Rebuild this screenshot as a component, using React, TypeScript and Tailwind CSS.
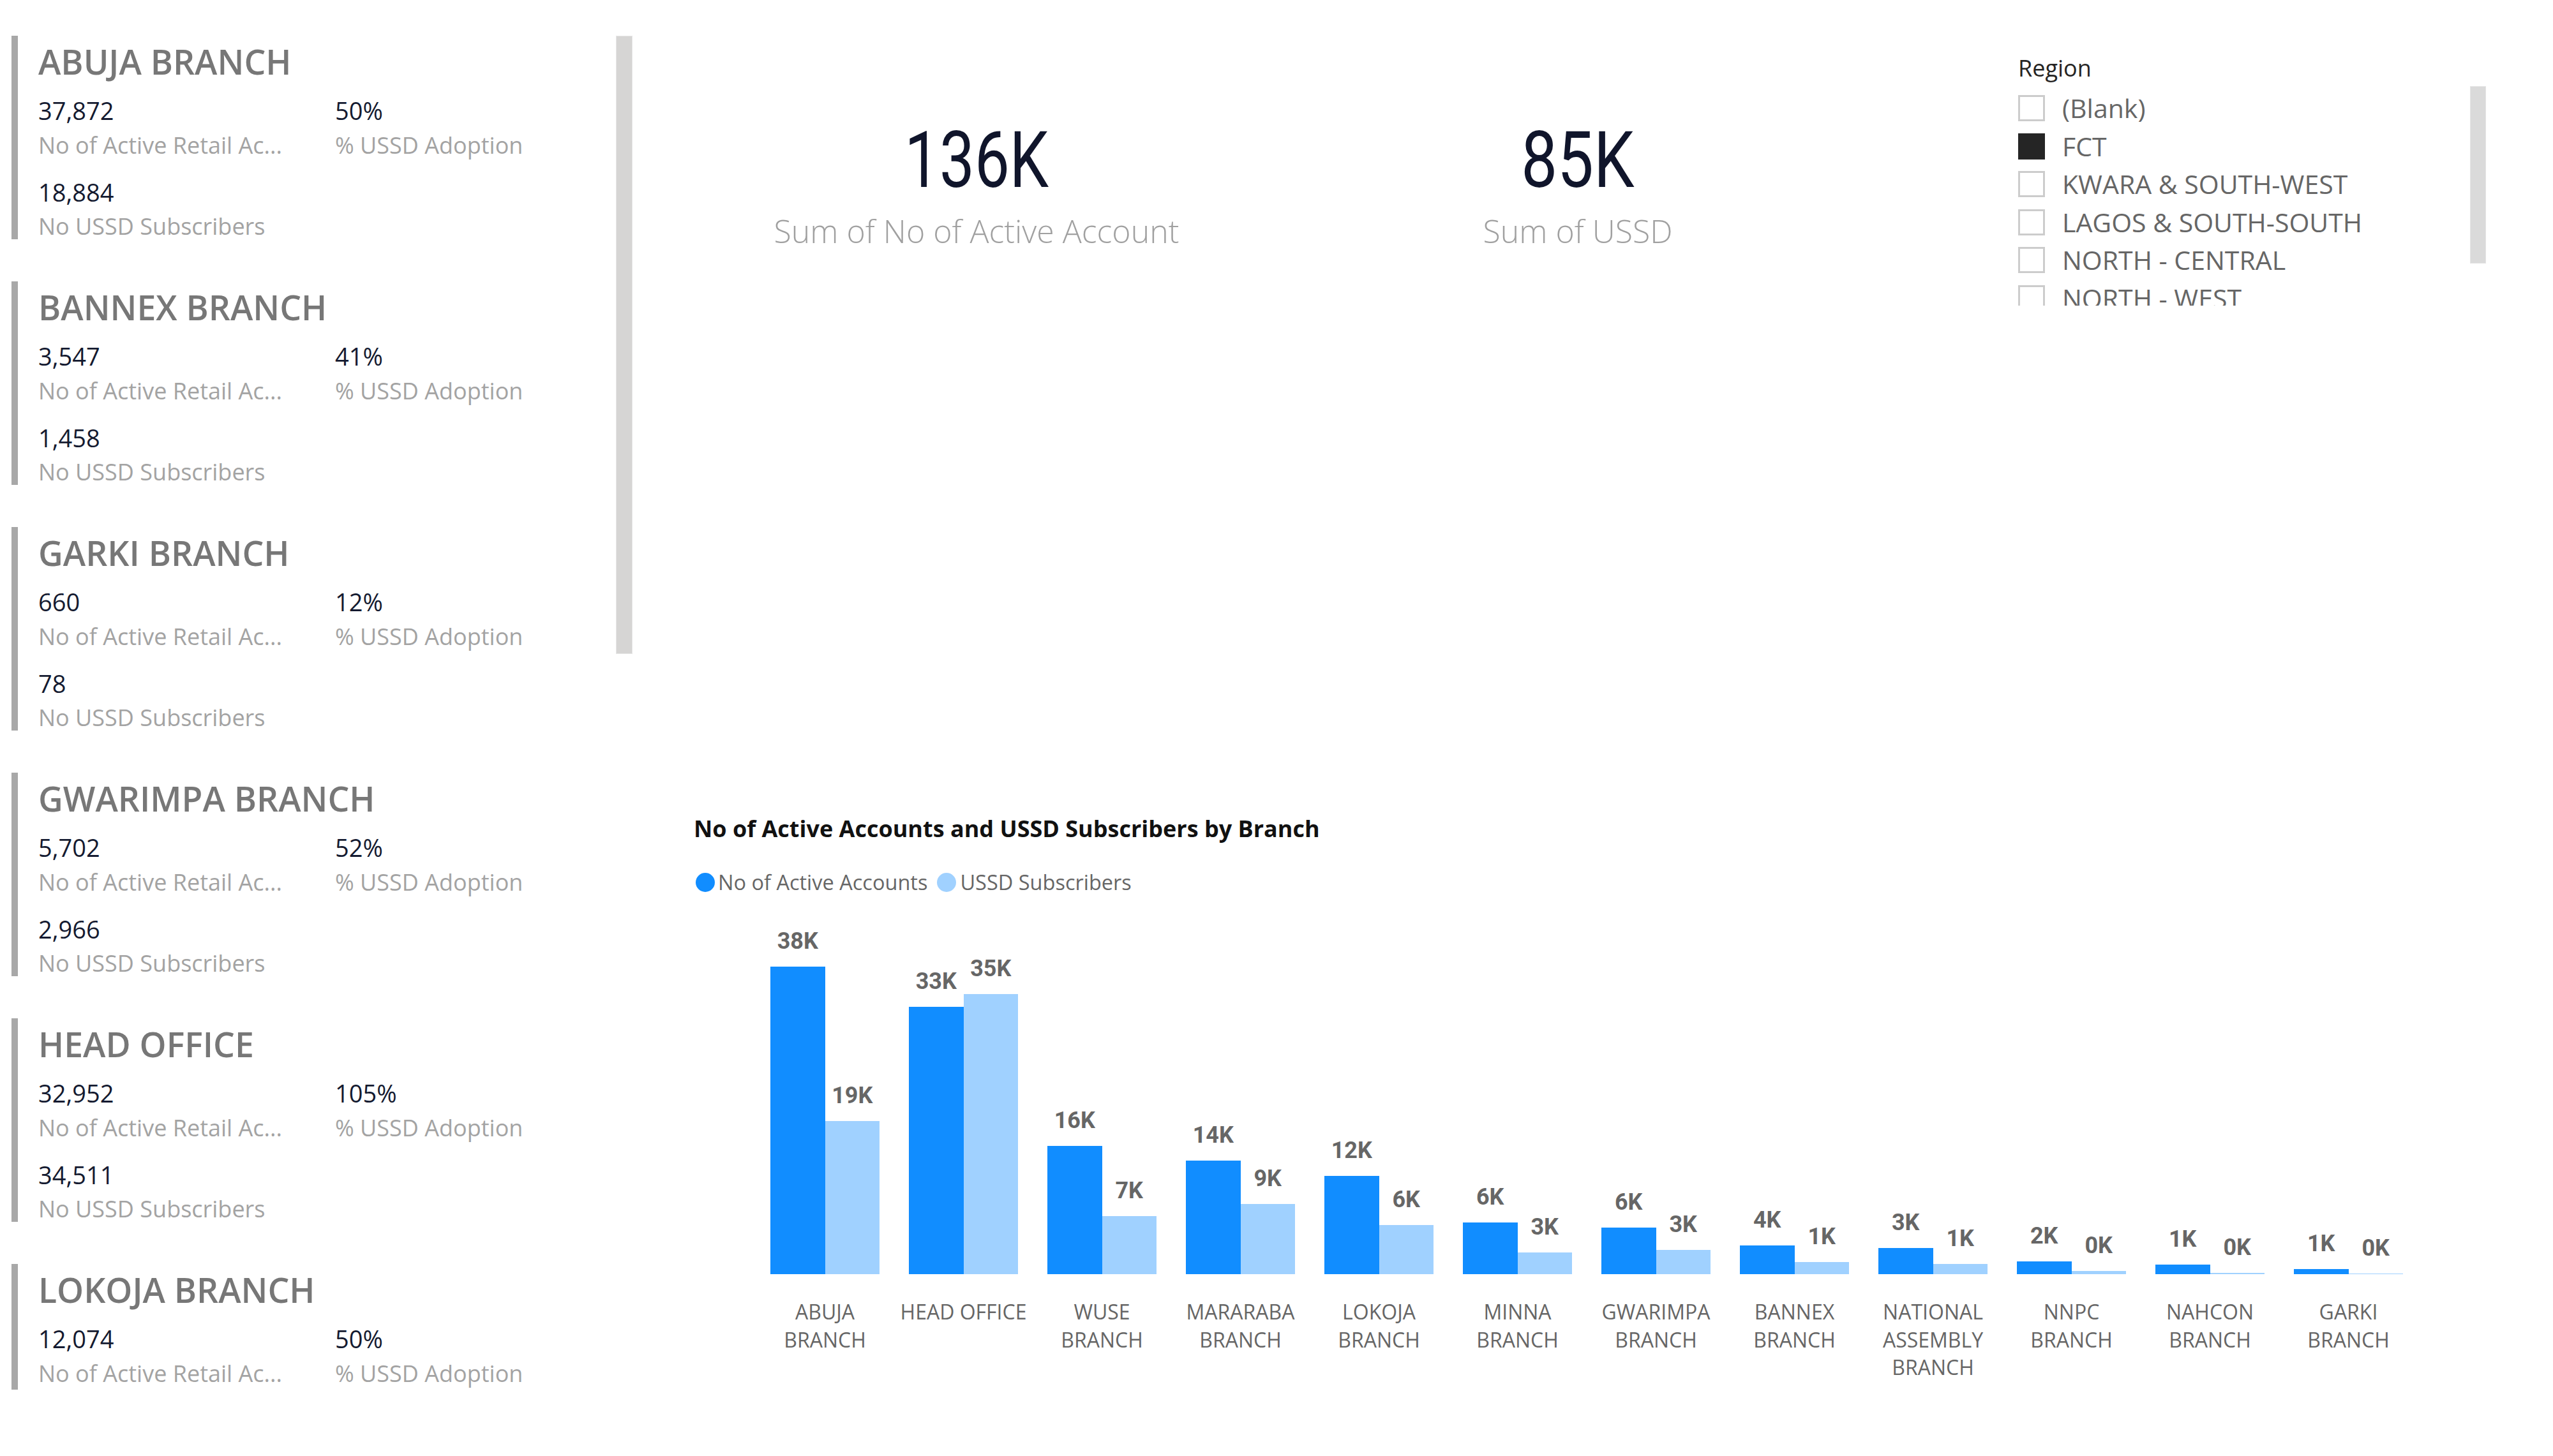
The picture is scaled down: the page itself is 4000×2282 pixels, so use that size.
import React from "react";

const cards = [
  { name: "ABUJA BRANCH", active: "37,872", pct: "50%", ussd: "18,884" },
  { name: "BANNEX BRANCH", active: "3,547", pct: "41%", ussd: "1,458" },
  { name: "GARKI BRANCH", active: "660", pct: "12%", ussd: "78" },
  { name: "GWARIMPA BRANCH", active: "5,702", pct: "52%", ussd: "2,966" },
  { name: "HEAD OFFICE", active: "32,952", pct: "105%", ussd: "34,511" },
  { name: "LOKOJA BRANCH", active: "12,074", pct: "50%", ussd: "6,037" },
];

const regions = [
  { name: "(Blank)", on: false },
  { name: "FCT", on: true },
  { name: "KWARA & SOUTH-WEST", on: false },
  { name: "LAGOS & SOUTH-SOUTH", on: false },
  { name: "NORTH - CENTRAL", on: false },
  { name: "NORTH - WEST", on: false },
];

const chart = [
  { label: ["ABUJA", "BRANCH"], a: 37872, u: 18884 },
  { label: ["HEAD OFFICE"], a: 32952, u: 34511 },
  { label: ["WUSE", "BRANCH"], a: 15820, u: 7190 },
  { label: ["MARARABA", "BRANCH"], a: 13960, u: 8620 },
  { label: ["LOKOJA", "BRANCH"], a: 12074, u: 6037 },
  { label: ["MINNA", "BRANCH"], a: 6380, u: 2640 },
  { label: ["GWARIMPA", "BRANCH"], a: 5702, u: 2966 },
  { label: ["BANNEX", "BRANCH"], a: 3547, u: 1458 },
  { label: ["NATIONAL", "ASSEMBLY", "BRANCH"], a: 3210, u: 1250 },
  { label: ["NNPC", "BRANCH"], a: 1540, u: 410 },
  { label: ["NAHCON", "BRANCH"], a: 1210, u: 150 },
  { label: ["GARKI", "BRANCH"], a: 660, u: 78 },
];

const SCALE = 482 / 37872;
const fmt = (v: number) => `${Math.round(v / 1000)}K`;

function BranchCard({ c }: { c: (typeof cards)[number] }) {
  return (
    <div className="h-[319px] shrink-0 border-l-[10px] border-[#a8a8a8] pl-[32px]">
      <div className="h-[82px] whitespace-nowrap text-[53.5px] font-semibold leading-[82px] text-[#777777]">
        {c.name}
      </div>
      <div className="mt-[10px] grid grid-cols-[465px_1fr]">
        <div>
          <div className="h-[50px] text-[38px] leading-[50px] text-[#141a30]">{c.active}</div>
          <div className="mt-[4px] h-[52px] whitespace-nowrap text-[36px] leading-[52px] text-[#a3a3a3]">
            No of Active Retail Ac...
          </div>
        </div>
        <div>
          <div className="h-[50px] text-[38px] leading-[50px] text-[#141a30]">{c.pct}</div>
          <div className="mt-[4px] h-[52px] whitespace-nowrap text-[36px] leading-[52px] text-[#a3a3a3]">
            % USSD Adoption
          </div>
        </div>
      </div>
      <div className="mt-[22px]">
        <div className="h-[50px] text-[38px] leading-[50px] text-[#141a30]">{c.ussd}</div>
        <div className="mt-[3px] h-[52px] whitespace-nowrap text-[36px] leading-[52px] text-[#a3a3a3]">
          No USSD Subscribers
        </div>
      </div>
    </div>
  );
}

function Kpi({ value, label, width, narrow }: { value: string; label: string; width: string; narrow: boolean }) {
  return (
    <div className={`flex flex-col items-center pt-[182px] ${width}`}>
      <div className="h-[140px] leading-[140px]">
        <span
          className={`inline-block origin-center font-['Roboto',sans-serif] text-[122px] text-[#10152b] ${
            narrow ? "scale-x-[0.8]" : "scale-x-[0.83]"
          }`}
        >
          {value}
        </span>
      </div>
      <div className="mt-[10px] h-[60px] whitespace-nowrap text-[50px] font-light leading-[60px] text-[#a0a0a0]">
        {label}
      </div>
    </div>
  );
}

function Bar({ v, color }: { v: number; color: string }) {
  return (
    <div className="flex w-[85.5px] flex-col items-center justify-end">
      <span className="mb-[18px] h-[44px] whitespace-nowrap font-['Roboto',sans-serif] text-[36px] font-bold leading-[44px] text-[#666666]">
        {fmt(v)}
      </span>
      <div className={`w-[85.5px] ${color}`} style={{ height: `${Math.max(v * SCALE, 1)}px` }} />
    </div>
  );
}

export default function App() {
  return (
    <div className="flex h-[2282px] w-[4000px] overflow-hidden bg-white font-['Open_Sans',sans-serif]">
      {/* Left multi-row card */}
      <div className="flex w-[1000px] shrink-0">
        <div className="h-[2178px] w-[965px] overflow-hidden pl-[18px] pt-[56px]">
          <div className="flex flex-col gap-[66px]">
            {cards.map((c) => (
              <BranchCard key={c.name} c={c} />
            ))}
          </div>
        </div>
        <div className="mt-[56px] h-[969px] w-[26px] border border-[#e6e6e6] bg-[#d6d5d4]" />
      </div>

      {/* Right */}
      <div className="flex w-[3000px] flex-col">
        <div className="flex h-[1274px]">
          <div className="w-[100px]" />
          <Kpi value="136K" label="Sum of No of Active Account" width="w-[860px]" narrow={true} />
          <Kpi value="85K" label="Sum of USSD" width="w-[1024px]" narrow={false} />
          <div className="ml-[178px] pt-[77px]">
            <div className="h-[60px] text-[36px] leading-[60px] text-[#252423]">Region</div>
            <div className="flex">
              <div className="h-[342px] w-[708px] overflow-hidden pt-[3px]">
                {regions.map((r) => (
                  <div key={r.name} className="flex h-[59.5px] items-center">
                    <div
                      className={`h-[41px] w-[42px] shrink-0 ${
                        r.on ? "bg-[#252525]" : "border-[3px] border-[#cccccc] bg-white"
                      }`}
                    />
                    <span className="ml-[27px] whitespace-nowrap text-[41px] leading-[59px] text-[#666666]">
                      {r.name}
                    </span>
                  </div>
                ))}
              </div>
              <div className="-mt-[2px] h-[278px] w-[25px] border border-[#e4e4e4] bg-[#dadada]" />
            </div>
          </div>
        </div>

        {/* Chart */}
        <div className="pl-[87px]">
          <div className="h-[50px] whitespace-nowrap text-[36px] font-bold leading-[50px] text-[#111111]">
            No of Active Accounts and USSD Subscribers by Branch
          </div>
          <div className="mt-[39px] flex h-[40px] items-center text-[32.5px] text-[#666666]">
            <span className="ml-[3px] h-[30px] w-[30px] rounded-full bg-[#118DFF]" />
            <span className="ml-[5px] whitespace-nowrap">No of Active Accounts</span>
            <span className="ml-[15px] h-[30px] w-[30px] rounded-full bg-[#A0D1FF]" />
            <span className="ml-[6px] whitespace-nowrap">USSD Subscribers</span>
          </div>
          <div className="ml-[97px] mt-[34px] flex">
            {chart.map((g) => (
              <div key={g.label.join(" ")} className="flex w-[217px] flex-col items-center">
                <div className="flex h-[560px] items-end">
                  <Bar v={g.a} color="bg-[#118DFF]" />
                  <Bar v={g.u} color="bg-[#A0D1FF]" />
                </div>
                <div className="mt-[37px] flex flex-col items-center text-[32px] text-[#666666]">
                  {g.label.map((l) => (
                    <div key={l} className="h-[43.5px] whitespace-nowrap leading-[43.5px]">
                      {l}
                    </div>
                  ))}
                </div>
              </div>
            ))}
          </div>
        </div>
      </div>
    </div>
  );
}
